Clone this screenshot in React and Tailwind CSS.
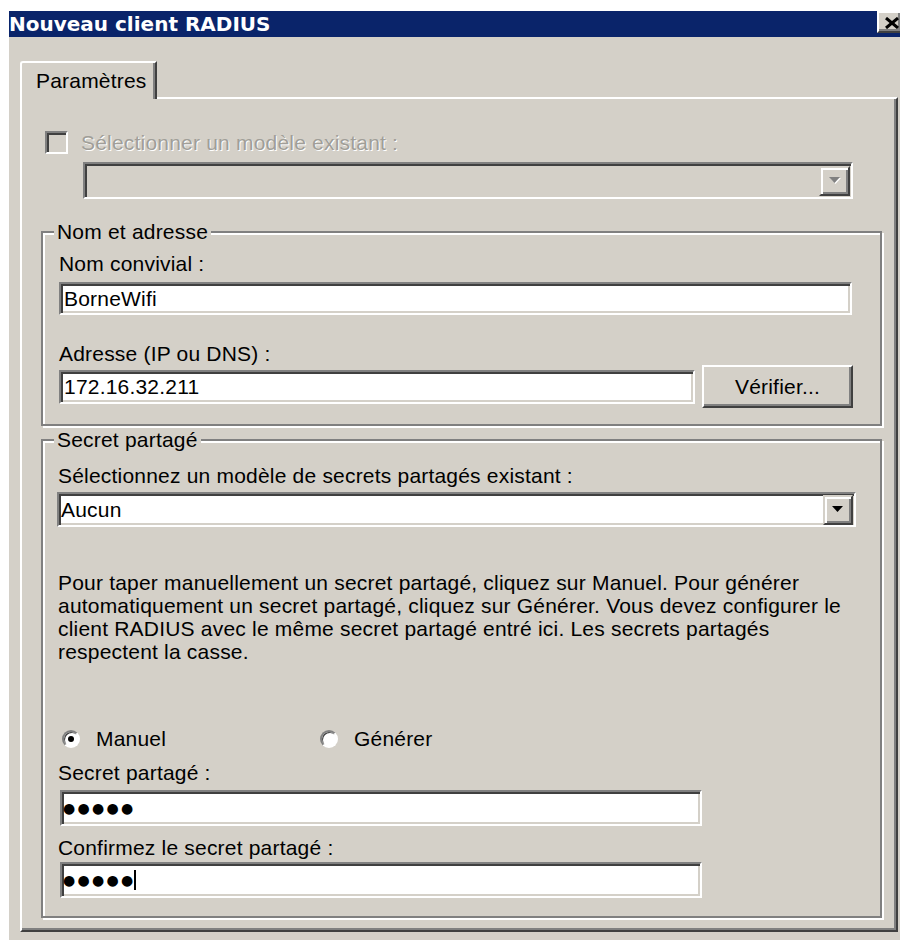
import React from 'react';

// classic 3D edge styles
const sunken =
  'border-2 border-t-[#808080] border-l-[#808080] border-b-white border-r-white shadow-[inset_2px_2px_0_#404040,inset_-2px_-2px_0_#d4d0c8]';
const raised =
  'border-2 border-t-white border-l-white border-b-[#404040] border-r-[#404040] shadow-[inset_-2px_-2px_0_#808080]';
const comboButton =
  'border-2 border-t-[#d4d0c8] border-l-[#d4d0c8] border-b-[#404040] border-r-[#404040] shadow-[inset_2px_2px_0_#fff,inset_-2px_-2px_0_#808080]';

const Arrow = ({ disabled }) => (
  <svg width="12" height="7" viewBox="0 0 12 7">
    {disabled && <polygon points="1,1 12,1 6.5,7" fill="#fff" />}
    <polygon points="0,0 11,0 5.5,6" fill={disabled ? '#808080' : '#000'} />
  </svg>
);

const GroupBox = ({ title, className, children }) => (
  <div className={`relative border-2 border-[#808080] shadow-[inset_2px_2px_0_#fff,2px_2px_0_#fff] ${className}`}>
    <span className="absolute -top-[13px] left-[11px] bg-[#d4d0c8] px-[3px] leading-[23px] whitespace-nowrap">
      {title}
    </span>
    {children}
  </div>
);

const Radio = ({ checked, label, className }) => (
  <label className={`flex items-center gap-[16px] ${className}`}>
    <span className="flex items-center justify-center w-[18px] h-[18px] rounded-full bg-white border-2 border-t-[#808080] border-l-[#808080] border-b-white border-r-white shadow-[inset_1px_1px_0_#404040]">
      {checked && <span className="w-[6px] h-[6px] rounded-full bg-black" />}
    </span>
    <span>{label}</span>
  </label>
);

const Secret = ({ caret }) => (
  <div className={`mt-[3px] ml-[2px] w-[642px] h-[36px] bg-white flex items-center pl-[1px] ${sunken}`}>
    <span className="font-['DejaVu_Sans',sans-serif] text-[14px] tracking-[2.3px] leading-[20px]">●●●●●</span>
    {caret && <span className="w-[2px] h-[20px] bg-black -ml-[2px]" />}
  </div>
);

export default function App() {
  return (
    <div className="w-[900px] h-[940px] bg-white pl-[9px] pt-[11px] overflow-hidden font-['Liberation_Sans',Arial,sans-serif] text-[21px] leading-[23px] tracking-[0.2px] text-black">
      <div className="w-[891px] h-[929px] bg-[#d4d0c8] flex flex-col">
        {/* title bar */}
        <div className="h-[26px] bg-[#0a246a] flex items-start justify-between">
          <span className="font-['DejaVu_Sans',sans-serif] font-bold text-[20px] leading-[26px] tracking-normal text-white whitespace-nowrap">
            Nouveau client RADIUS
          </span>
          <div className={`w-[23px] h-[22px] bg-[#d4d0c8] border-r-0 ${raised} pl-[6px] pt-[4px]`}>
            <svg width="15" height="12" viewBox="0 0 15 12">
              <path d="M1 1 L13 11 M13 1 L1 11" stroke="#000" strokeWidth="3" />
            </svg>
          </div>
        </div>

        <div className="pl-[11px] pt-[24px]">
          {/* tab header */}
          <div className="relative z-10 w-[137px] h-[38px] bg-[#d4d0c8] border-l-2 border-t-2 border-r-2 border-l-white border-t-white border-r-[#404040] rounded-tl-[3px] shadow-[inset_-2px_0_0_#808080] pl-[14px] pt-[6px]">
            Paramètres
          </div>

          {/* tab page */}
          <div className="-mt-[2px] w-[878px] h-[835px] border-2 border-l-white border-t-white border-r-[#404040] border-b-[#404040] shadow-[inset_-2px_-2px_0_#808080] flex flex-col">
            <div className="mt-[32px] ml-[23px] flex items-center gap-[13px]">
              <span className={`w-[23px] h-[23px] bg-[#d4d0c8] ${sunken}`} />
              <span className="text-[#a09e98] [text-shadow:1px_1px_0_#fff]">Sélectionner un modèle existant :</span>
            </div>

            <div className={`mt-[8px] ml-[61px] w-[770px] h-[37px] bg-[#d4d0c8] flex items-center justify-end pr-[1px] ${sunken}`}>
              <div className={`w-[31px] h-[30px] bg-[#d4d0c8] flex items-center justify-center ${comboButton}`}>
                <Arrow disabled />
              </div>
            </div>

            <GroupBox title="Nom et adresse" className="mt-[32px] ml-[19px] w-[841px] h-[195px]">
              <div className="flex flex-col pl-[16px] pt-[19px]">
                <span>Nom convivial :</span>
                <div className={`mt-[7px] w-[793px] h-[33px] bg-white flex items-center pl-[3px] ${sunken}`}>BorneWifi</div>
                <span className="mt-[27px]">Adresse (IP ou DNS) :</span>
                <div className="flex items-center gap-[7px]">
                  <div className={`w-[636px] h-[34px] bg-white flex items-center pl-[3px] ${sunken}`}>172.16.32.211</div>
                  <button className={`w-[151px] h-[43px] bg-[#d4d0c8] flex items-center justify-center ${raised}`}>
                    Vérifier...
                  </button>
                </div>
              </div>
            </GroupBox>

            <GroupBox title="Secret partagé" className="mt-[13px] ml-[19px] w-[841px] h-[479px]">
              <div className="flex flex-col pl-[15px] pt-[23px]">
                <span>Sélectionnez un modèle de secrets partagés existant :</span>
                <div className={`mt-[5px] -ml-[1px] w-[799px] h-[35px] bg-white flex items-center justify-between pl-[2px] pr-[1px] ${sunken}`}>
                  <span>Aucun</span>
                  <div className={`w-[30px] h-[30px] bg-[#d4d0c8] flex items-center justify-center ${comboButton}`}>
                    <Arrow />
                  </div>
                </div>

                <p className="mt-[44px] whitespace-nowrap">
                  Pour taper manuellement un secret partagé, cliquez sur Manuel. Pour générer
                  <br />
                  automatiquement un secret partagé, cliquez sur Générer. Vous devez configurer le
                  <br />
                  client RADIUS avec le même secret partagé entré ici. Les secrets partagés
                  <br />
                  respectent la casse.
                </p>

                <div className="mt-[64px] ml-[4px] flex items-center">
                  <Radio checked label="Manuel" className="w-[258px]" />
                  <Radio label="Générer" />
                </div>

                <span className="mt-[11px]">Secret partagé :</span>
                <div className="mt-[3px]">
                  <Secret />
                </div>
                <span className="mt-[10px]">Confirmez le secret partagé :</span>
                <Secret caret />
              </div>
            </GroupBox>
          </div>
        </div>
      </div>
    </div>
  );
}
